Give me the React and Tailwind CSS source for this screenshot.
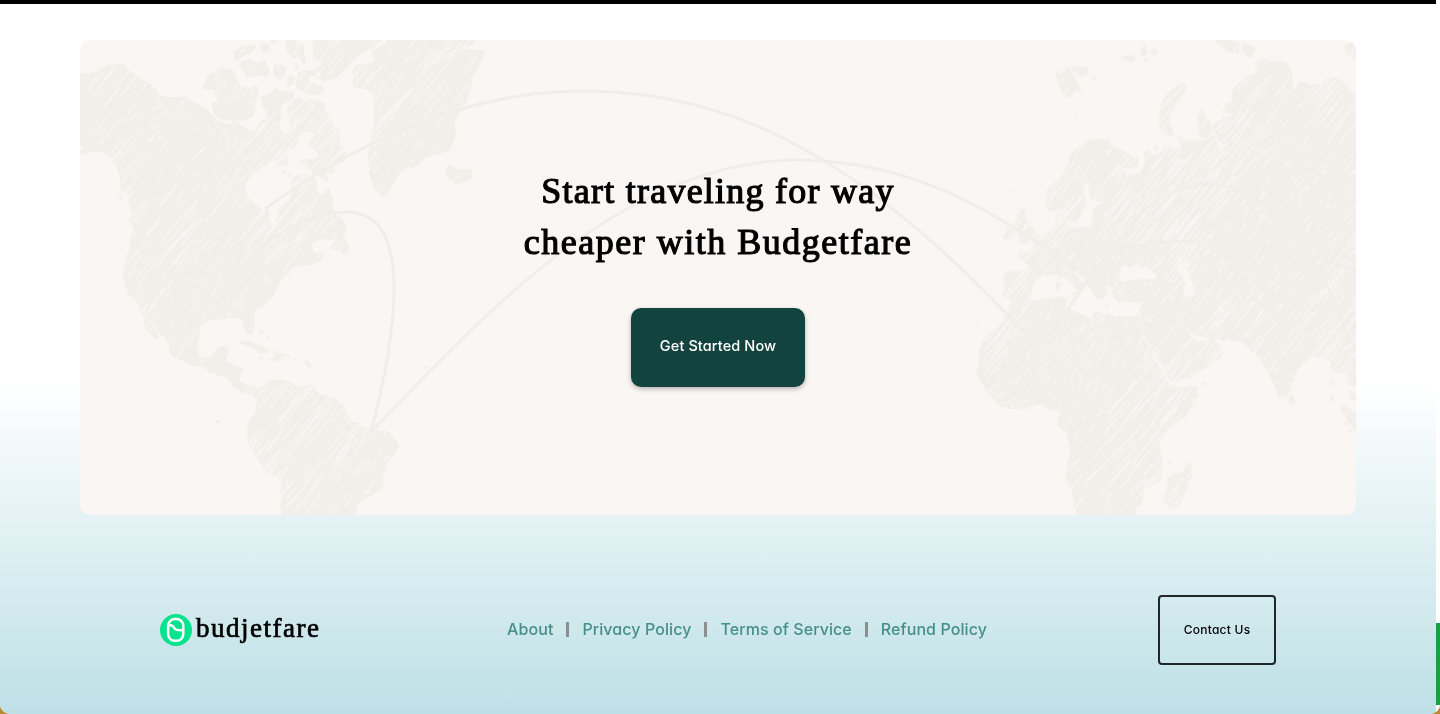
import React from "react";

// Outline points use a 3x grid; every group that draws them scales by 1/3.
const americas = [
  "0,115 20,112 50,110 70,95 95,85 130,85 140,100 175,125 215,150 240,183 280,185 320,185 335,200 370,212 400,248 440,270 470,258 510,287 530,290 535,260 550,250 565,262 590,258 605,292 630,290 635,270 625,245 650,238 670,200 700,192 735,200 735,225 755,260 778,290 775,320 800,355 790,375 762,385 760,415 735,398 745,435 700,412 685,385 655,375 712,370 715,345 682,320 708,308 695,280 670,285 650,310 645,330 615,345 625,385 590,388 585,365 540,395 500,430 492,455 500,485 520,500 535,518 565,518 562,550 575,577 590,560 597,520 625,500 640,470 638,430 660,415 700,425 712,445 705,465 725,480 747,455 755,500 760,530 775,545 797,565 795,600 750,610 710,610 690,625 700,650 735,655 725,670 690,685 640,690 600,735 570,790 545,808 520,820 520,880 512,898 495,880 490,850 450,840 440,850 380,852 360,875 350,925 355,960 375,970 400,960 420,930 445,932 435,980 460,990 485,995 485,1015 472,1035 500,1050 525,1050 540,1062 560,1042 600,1028 650,1055 695,1048 715,1075 760,1088 790,1110 805,1150 860,1180 920,1187 950,1215 952,1245 920,1275 905,1330 905,1360 850,1385 825,1415 828,1450 607,1450 607,1350 600,1325 565,1310 520,1245 500,1205 505,1160 530,1130 532,1090 515,1065 500,1075 460,1050 440,1020 400,1010 370,993 345,992 270,950 268,915 232,880 198,818 215,865 235,905 225,908 195,870 190,830 165,790 145,775 130,720 145,650 165,580 145,545 165,530 150,515 142,460 130,472 122,465 125,430 105,375 70,345 40,343 10,356 2,345 20,335 0,330 -20,330 -20,120",
  "940,0 1175,0 1182,25 1125,35 1215,48 1200,80 1180,110 1162,185 1150,210 1118,265 1127,290 1110,340 1040,360 1010,385 965,400 935,450 912,484 880,450 870,420 866,350 880,290 888,210 880,170 855,155 820,152 825,88 870,85 890,70 875,48 910,30",
  "370,155 385,120 430,96 465,108 470,145 495,162 535,150 525,190 520,240 470,256 410,245 395,205 420,195 400,160",
  "700,0 850,0 905,15 830,60 770,125 735,132 690,115 680,135 730,150 730,172 690,175 650,155 655,110 700,105 735,80 700,60",
  "1093,395 1115,390 1120,405 1175,400 1174,428 1135,443 1108,430",
  "755,635 780,603 803,620 803,650 785,645",
  "460,50 480,35 525,25 520,45 485,60 470,78",
  "480,85 510,68 530,85 555,70 568,118 500,122",
  "542,22 570,30 565,45 545,45",
  "570,8 592,8 582,24",
  "582,80 620,95 605,128 582,120",
  "618,145 630,115 642,120 638,148",
  "620,12 650,10 652,60 635,68 620,40",
  "658,25 675,30 668,55 678,75 668,80 655,60",
  "640,85 652,82 652,98 644,100",
  "545,180 570,180 590,150 602,175 572,225 550,220",
  "602,165 642,170 635,192 600,205 600,260 575,280 560,255 562,230",
  "622,215 650,188 670,192 645,235 625,235",
  "120,480 130,482 122,500",
  "480,920 500,911 525,925 565,945 540,952 515,930 482,924",
  "580,948 600,955 632,962 600,972 570,970 590,962",
  "532,966 548,965 545,971",
  "640,965 655,968 648,972",
  "668,975 690,982 698,998 685,990",
  "537,883 550,886 545,892",
  "556,900 566,902 562,906",
  "405,1154 422,1156 415,1160",
  "1032,993 1045,992 1038,998",
  "604,405 616,405 612,412",
  "622,414 632,416 626,420",
];

const eurasia = [
  "1210,190 1188,178 1165,160 1150,138 1130,123 1098,128 1090,152 1050,145 1015,138 1005,162 993,160 998,120 985,85 960,75 930,82 905,65 885,75 895,110 860,125 820,160 815,190 828,200 796,205 800,225 822,245 795,242 780,258 758,262 770,300 785,320 812,325 790,335 788,368 775,340 760,300 745,255 722,215 713,290 742,322 700,312 675,317 655,298 672,325 640,345 620,333 600,355 580,365 565,340 553,350 560,375 545,410 503,427 478,390 530,392 535,372 500,350 450,330 445,315 395,310 370,330 335,350 320,400 310,420 270,460 258,465 260,515 270,525 300,515 315,545 340,562 360,540 375,500 365,455 408,418 385,450 392,490 445,497 405,515 395,550 405,573 330,578 315,560 300,530 288,545 290,580 245,605 215,645 172,655 205,685 210,708 140,708 130,735 140,755 128,775 145,788 200,790 215,770 215,745 240,715 300,712 340,740 358,768 378,750 340,715 340,700 385,735 410,788 440,783 432,745 455,750 460,780 480,797 547,797 540,840 470,845 405,825 395,850 350,830 320,820 317,783 200,797 155,790 150,820 125,865 60,925 60,980 50,1015 95,1080 130,1115 190,1118 245,1100 270,1120 303,1120 293,1170 325,1195 335,1250 318,1320 335,1350 352,1450 520,1450 525,1410 545,1400 550,1360 600,1330 605,1270 595,1210 620,1180 680,1135 712,1080 710,1052 635,1057 600,1010 570,940 537,888 545,883 580,940 610,985 635,1040 700,1015 780,965 785,940 758,908 735,922 710,920 675,880 670,863 700,890 740,905 850,915 905,970 935,1030 965,1095 990,1060 1005,1005 1050,960 1105,962 1120,1005 1160,1010 1175,1050 1210,1045",
  "180,520 195,515 192,545 215,580 240,605 205,615 180,625 178,590 165,560",
  "130,605 150,560 168,570 160,600 138,612",
  "285,105 310,112 322,97 340,120 365,165 345,160 325,187 305,165",
  "335,94 385,95 380,118 360,122",
  "395,122 405,122 400,133",
  "680,148 665,145 620,175 600,215 598,285 635,303 640,292 625,260 628,225 665,175",
  "487,65 520,57 525,75 500,75",
  "542,58 552,20 563,55",
  "572,42 595,38 582,62",
  "548,73 570,70 558,79",
  "765,8 805,10 840,30 838,55 800,42 775,25",
  "845,22 888,38 868,68 850,48",
  "1148,28 1210,20 1210,70 1175,68",
  "583,332 595,336 586,346",
  "785,220 793,224 788,230",
  "155,458 165,460 160,467",
  "343,234 352,235 348,240",
  "688,1278 696,1310 680,1350 660,1405 635,1418 612,1400 625,1360 625,1330 640,1318 665,1310",
  "988,1078 1000,1078 1006,1105 992,1110",
  "1140,1115 1150,1108 1210,1150 1210,1220 1188,1190",
  "1168,1060 1188,1080 1210,1090 1210,1100 1168,1086",
  "1108,1035 1116,1035 1112,1053",
  "1112,1076 1122,1090 1116,1098",
  "1154,1158 1163,1162 1158,1168",
  "1164,1180 1174,1182 1169,1190",
  "48,867 60,866 55,872",
  "622,1272 634,1276 628,1283",
  "738,1364 748,1362 744,1368",
  "730,1040 742,1040 736,1046",
  "289,740 301,740 299,760 291,760",
  "292,722 302,720 299,729",
  "332,772 358,768 350,783",
  "434,804 448,804 444,809",
];

const seas = [
  "480,735 478,700 490,682 510,695 525,683 545,697 560,690 592,718 585,732 545,727 500,738",
  "648,685 668,678 692,682 682,700 692,730 705,760 705,778 672,778 668,755 680,745 660,715",
];

// Rounds each corner over at most a few units so the coast stays crisp.
function outline(text) {
  const p = text.split(" ").map((s) => s.split(",").map(Number));
  const toward = (a, b) => {
    const len = Math.hypot(b[0] - a[0], b[1] - a[1]) || 1;
    const t = Math.min(0.5, 11 / len);
    return (a[0] + (b[0] - a[0]) * t).toFixed(1) + " " + (a[1] + (b[1] - a[1]) * t).toFixed(1);
  };
  let d = "";
  p.forEach((q, i) => {
    const prev = p[(i + p.length - 1) % p.length];
    const next = p[(i + 1) % p.length];
    d += (i ? "L" : "M") + toward(q, prev) + "Q" + q[0] + " " + q[1] + " " + toward(q, next);
  });
  return d + "Z";
}

const americasPath = americas.map(outline).join(" ");
const eurasiaPath = eurasia.map(outline).join(" ");
const seasPath = seas.map(outline).join(" ");

function hatch(seed, count, width, height, angle) {
  let s = seed;
  const rnd = () => {
    s = (s * 16807) % 2147483647;
    return s / 2147483647;
  };
  let d = "";
  for (let i = 0; i < count; i++) {
    const x = rnd() * width;
    const y = rnd() * height;
    const dense = Math.sin(x / 95 + 1) + Math.cos(y / 120 + x / 210);
    const len = dense > 0 ? 30 + rnd() * 85 : 5 + rnd() * 25;
    const a = angle + rnd() * 0.06;
    d += `M${x.toFixed(0)} ${y.toFixed(0)}l${(Math.cos(a) * len).toFixed(1)} ${(-Math.sin(a) * len).toFixed(1)}`;
  }
  return d;
}

const hatchWest = hatch(4217, 1400, 1230, 1440, 0.85);
const hatchEast = hatch(9311, 1550, 1200, 1440, 0.85);

function WorldMap() {
  return (
    <svg className="col-start-1 row-start-1 h-full w-full" viewBox="80 40 1276 475" aria-hidden="true">
      <defs>
        <clipPath id="west"><path d={americasPath} /></clipPath>
        <clipPath id="east"><path d={eurasiaPath} /></clipPath>
        <filter id="rough" filterUnits="userSpaceOnUse" x="60" y="20" width="1320" height="520">
          <feTurbulence type="fractalNoise" baseFrequency="0.14" numOctaves="2" seed="4" />
          <feDisplacementMap in="SourceGraphic" scale="3.5" xChannelSelector="R" yChannelSelector="G" />
        </filter>
      </defs>
      <g filter="url(#rough)">
        <g transform="translate(80 36) scale(.33333)">
          <path d={americasPath} fill="#f2efea" stroke="#f2efea" strokeWidth="5" />
        </g>
        <g transform="translate(960 36) scale(.33333)">
          <path d={eurasiaPath} fill="#f2efea" stroke="#f2efea" strokeWidth="5" />
          <path d={seasPath} fill="#faf6f3" />
        </g>
      </g>
      <g transform="translate(80 36) scale(.33333)">
        <path d={hatchWest} clipPath="url(#west)" stroke="#f9f5f2" strokeWidth="3.8" strokeLinecap="round" />
      </g>
      <g transform="translate(960 36) scale(.33333)">
        <path d={hatchEast} clipPath="url(#east)" stroke="#f9f5f2" strokeWidth="3.8" strokeLinecap="round" />
      </g>
      <g fill="none" stroke="#f1eeea" strokeWidth="3">
        <path d="M265 209C330 160 450 91 582 91C730 91 865 155 1040 350" />
        <path d="M375 428C480 320 620 161 797 160C900 160 980 200 1075 268" />
        <path d="M262 245C290 225 320 212 347 212C385 212 394 250 394 288C394 340 382 385 372 430" />
        <path d="M1042 350C1068 308 1110 245 1150 205C1210 165 1255 188 1290 230C1320 265 1335 295 1350 345" />
        <path d="M1075 258C1140 240 1250 225 1356 272" />
      </g>
    </svg>
  );
}

function Logo() {
  return (
    <a className="flex w-[176px] items-center gap-1">
      <svg className="size-8 shrink-0" viewBox="0 0 32 32" fill="none">
        <circle cx="16" cy="16" r="16" fill="#06e38e" />
        <rect x="8.1" y="5.1" width="15.2" height="21.6" rx="6.6" stroke="#fff" strokeWidth="2.5" />
        <path d="M8.8 11.6C11.6 10.4 13.2 12 14.2 14C15.3 16.2 18.5 16.4 23 16.2" stroke="#fff" strokeWidth="2.5" />
      </svg>
      <span className="-mt-[4px] whitespace-nowrap font-['Liberation_Serif',serif] text-[27px] leading-8 tracking-[1.5px] text-black [-webkit-text-stroke:0.7px_#000]">
        budjetfare
      </span>
    </a>
  );
}

const sans = "font-['Inter',sans-serif] [font-feature-settings:'cv11']";

function Divider() {
  return <span className="h-[15px] w-[3px] bg-[#8b8f90]" />;
}

export default function App() {
  return (
    <div className="h-[714px] w-[1440px] overflow-hidden bg-[#b88a34]">
      <div className="flex h-full overflow-hidden rounded-b-[10px] bg-white">
        <main className="flex h-full w-[1436px] flex-col bg-[linear-gradient(180deg,#ffffff_0px,#ffffff_383px,#bde0e6_714px)]">
          <div className="h-1 shrink-0 bg-black" />
          <section className="mx-20 mt-9 grid h-[475px] shrink-0 overflow-hidden rounded-[10px] bg-[#faf6f3]">
            <WorldMap />
            <div className="z-10 col-start-1 row-start-1 flex flex-col items-center pt-[126px]">
              <h1 className="text-center font-['Liberation_Serif',serif] text-[36px] leading-[51px] text-black [-webkit-text-stroke:1.15px_#000]">
                <span className="block whitespace-nowrap tracking-[1.25px]">Start traveling for way</span>
                <span className="block whitespace-nowrap tracking-[1.5px]">cheaper with Budgetfare</span>
              </h1>
              <button className={`mt-[40px] h-[79px] w-[174px] rounded-[10px] bg-[#13433f] pb-[4px] text-[14.5px] font-medium tracking-[0.1px] text-white shadow-[0_2px_5px_rgba(0,0,0,0.28)] ${sans}`}>
                Get Started Now
              </button>
            </div>
          </section>
          <footer className="mx-40 mt-20 flex h-[70px] shrink-0 items-center justify-between">
            <Logo />
            <nav className={`flex items-center gap-[13px] whitespace-nowrap pb-[2px] text-[16px] font-medium tracking-[0.08px] text-[#468f89] ${sans}`}>
              <a>About</a>
              <Divider />
              <a>Privacy Policy</a>
              <Divider />
              <a>Terms of Service</a>
              <Divider />
              <a>Refund Policy</a>
            </nav>
            <button className={`h-[70px] w-[118px] rounded-[4px] border-2 border-[#222626] text-[12px] font-medium tracking-[0.25px] text-black ${sans}`}>
              Contact Us
            </button>
          </footer>
        </main>
        <aside className="w-1 bg-white pt-[623px]">
          <div className="h-[82px] bg-[#18a048]" />
        </aside>
      </div>
    </div>
  );
}
